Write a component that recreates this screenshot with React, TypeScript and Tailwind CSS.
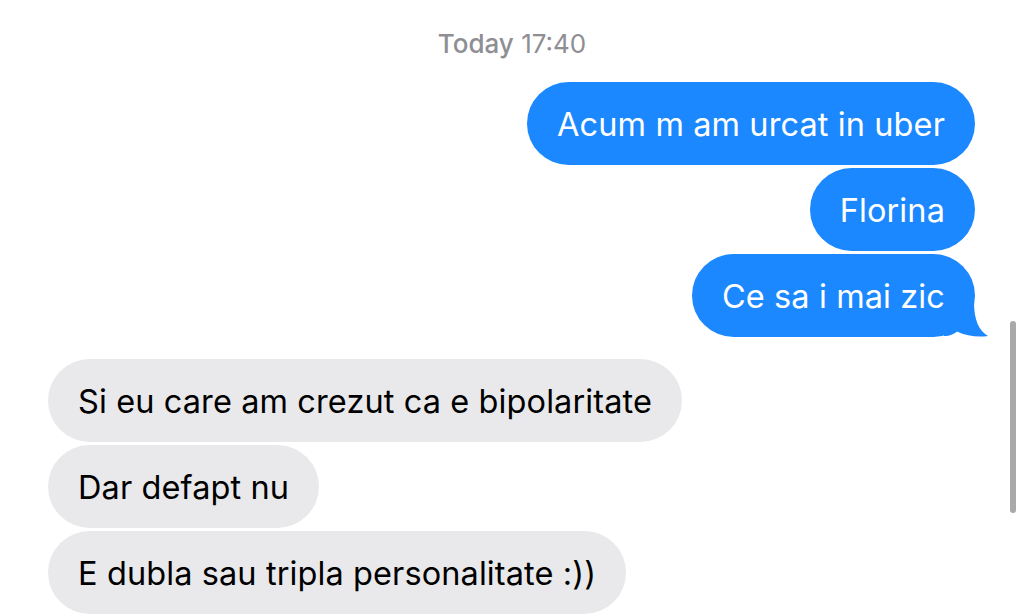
import React from "react";

const sent = ["Acum m am urcat in uber", "Florina", "Ce sa i mai zic"];
const received = [
  "Si eu care am crezut ca e bipolaritate",
  "Dar defapt nu",
  "E dubla sau tripla personalitate :))",
];

const Tail = () => (
  <svg
    className="absolute right-[-14px] bottom-0"
    width="45"
    height="43"
    viewBox="0 0 45 43"
  >
    <path
      d="M0 0 H30 V8 C30 26 35 37 44 42 C34 43.5 22 42 13 37.5 C10 40 6 42 0 42 Z"
      fill="#1b88ff"
    />
  </svg>
);

const App = () => {
  return (
    <div className="relative w-full h-[615px] bg-white overflow-hidden font-['Inter',sans-serif]">
      <div className="flex flex-col">
        <p className="mt-[28px] text-center text-[26px] leading-[32px] text-[#8e8e93]">
          <span className="font-medium">Today</span> 17:40
        </p>

        <div className="mt-[22px] flex flex-col items-end gap-[3px] pr-[49px]">
          {sent.map((m, i) => (
            <div
              key={m}
              className="relative h-[83px] flex items-center pt-[3px] px-[30px] rounded-[42px] bg-[#1b88ff] text-white text-[32.5px] tracking-[0.1px]"
            >
              <span className="relative z-10">{m}</span>
              {i === sent.length - 1 && <Tail />}
            </div>
          ))}
        </div>

        <div className="mt-[22px] flex flex-col items-start gap-[3px] pl-[48px]">
          {received.map((m) => (
            <div
              key={m}
              className="h-[83px] flex items-center pt-[3px] px-[30px] rounded-[42px] bg-[#e9e9eb] text-black text-[32.5px] tracking-[0.1px]"
            >
              {m}
            </div>
          ))}
        </div>
      </div>

      {/* scroll indicator */}
      <div className="absolute left-[1010px] top-[321px] w-[6px] h-[192px] rounded-full bg-[#a9a9a9]" />
    </div>
  );
};

export default App;
